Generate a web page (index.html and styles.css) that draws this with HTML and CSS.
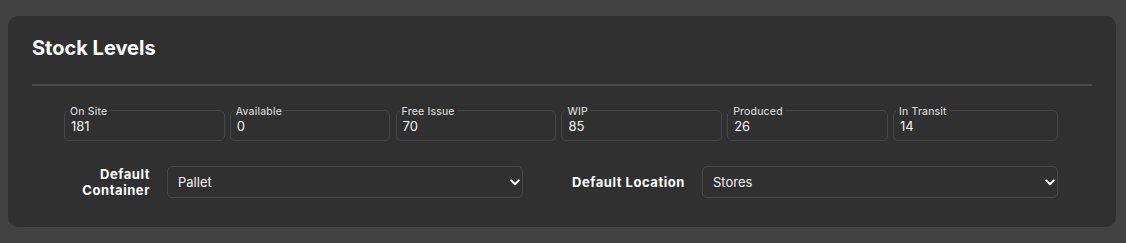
FILE: index.html
```html
<!DOCTYPE html>
<html lang="en">
<head>
<meta charset="UTF-8" />
<meta name="viewport" content="width=device-width, initial-scale=1" />
<title>Stock Levels</title>
<link rel="stylesheet" href="styles.css">
</head>
<body>
<main class="card" aria-label="Stock Levels">
  <h2>Stock Levels</h2>
  <hr class="divider" />

  <div class="stock-grid">
    <fieldset class="stock-box">
      <legend>On Site</legend>
      <div class="stock-value">181</div>
    </fieldset>
    <fieldset class="stock-box">
      <legend>Available</legend>
      <div class="stock-value">0</div>
    </fieldset>
    <fieldset class="stock-box">
      <legend>Free Issue</legend>
      <div class="stock-value">70</div>
    </fieldset>
    <fieldset class="stock-box">
      <legend>WIP</legend>
      <div class="stock-value">85</div>
    </fieldset>
    <fieldset class="stock-box">
      <legend>Produced</legend>
      <div class="stock-value">26</div>
    </fieldset>
    <fieldset class="stock-box">
      <legend>In Transit</legend>
      <div class="stock-value">14</div>
    </fieldset>
  </div>

  <div class="defaults">
    <label for="defaultContainer" class="defaults-label">Default Container</label>
    <div class="select-wrap">
      <select id="defaultContainer" name="defaultContainer">
        <option>Pallet</option>
        <option>Box</option>
        <option>Crate</option>
      </select>
      <svg class="chevron" width="10" height="7" viewBox="0 0 10 7" aria-hidden="true"><path d="M1.2 1.4L5 5.2l3.8-3.8" fill="none" stroke="#fff" stroke-width="2" stroke-linecap="round" stroke-linejoin="round"/></svg>
    </div>

    <label for="defaultLocation" class="defaults-label second">Default Location</label>
    <div class="select-wrap">
      <select id="defaultLocation" name="defaultLocation">
        <option>Stores</option>
        <option>Warehouse</option>
        <option>Dispatch</option>
      </select>
      <svg class="chevron" width="10" height="7" viewBox="0 0 10 7" aria-hidden="true"><path d="M1.2 1.4L5 5.2l3.8-3.8" fill="none" stroke="#fff" stroke-width="2" stroke-linecap="round" stroke-linejoin="round"/></svg>
    </div>
  </div>
</main>
</body>
</html>
```

FILE: styles.css
```css
body {
  font-family: Inter, "Noto Sans", sans-serif;
  background: #424242;
  color: #f2f2f2;
  margin: 0;
  padding: 16px 10px 16px 8px;
}
.card {
  background: #303030;
  border-radius: 10px;
  padding: 20px 24px 29px;
}
h2 {
  margin: 0;
  font-size: 20px;
  line-height: 24px;
  font-weight: 700;
  color: #fff;
}
.divider {
  margin: 24px 0 18px;
  border: none;
  border-top: 2px solid #4a4a4a;
}
.stock-grid {
  display: grid;
  grid-template-columns: repeat(5, 160.5px) 1fr;
  gap: 5.3px;
  padding: 0 34px 0 32px;
}
.stock-box {
  margin: 0;
  min-width: 0;
  padding: 0 6px 4px;
  border: 1px solid #464646;
  border-radius: 5px;
}
.stock-box legend {
  position: relative;
  top: 2px;
  margin-left: -3px;
  padding: 0 2px;
  font-size: 10.5px;
  line-height: 12px;
  letter-spacing: 0.2px;
  color: #e4e4e4;
}
.stock-value {
  font-size: 13px;
  line-height: 20px;
  color: #f4f4f4;
}
.defaults {
  display: grid;
  grid-template-columns: 86px 1fr 145px 1fr;
  column-gap: 17px;
  align-items: center;
  margin-top: 25px;
  padding: 0 34px 0 32px;
}
.defaults-label {
  text-align: right;
  font-size: 13px;
  line-height: 16px;
  font-weight: 700;
  letter-spacing: 0.55px;
  color: #fff;
}
.defaults-label.second {
  padding-left: 20px;
  white-space: nowrap;
}
.select-wrap {
  position: relative;
}
.select-wrap select {
  width: 100%;
  height: 32px;
  padding: 0 24px 0 10px;
  background: #303030;
  color: #f4f4f4;
  border: 1px solid #484848;
  border-radius: 5px;
  font-family: inherit;
  font-size: 13px;
  appearance: none;
  outline: none;
}
.chevron {
  position: absolute;
  right: 3px;
  top: 13px;
  pointer-events: none;
}
```
